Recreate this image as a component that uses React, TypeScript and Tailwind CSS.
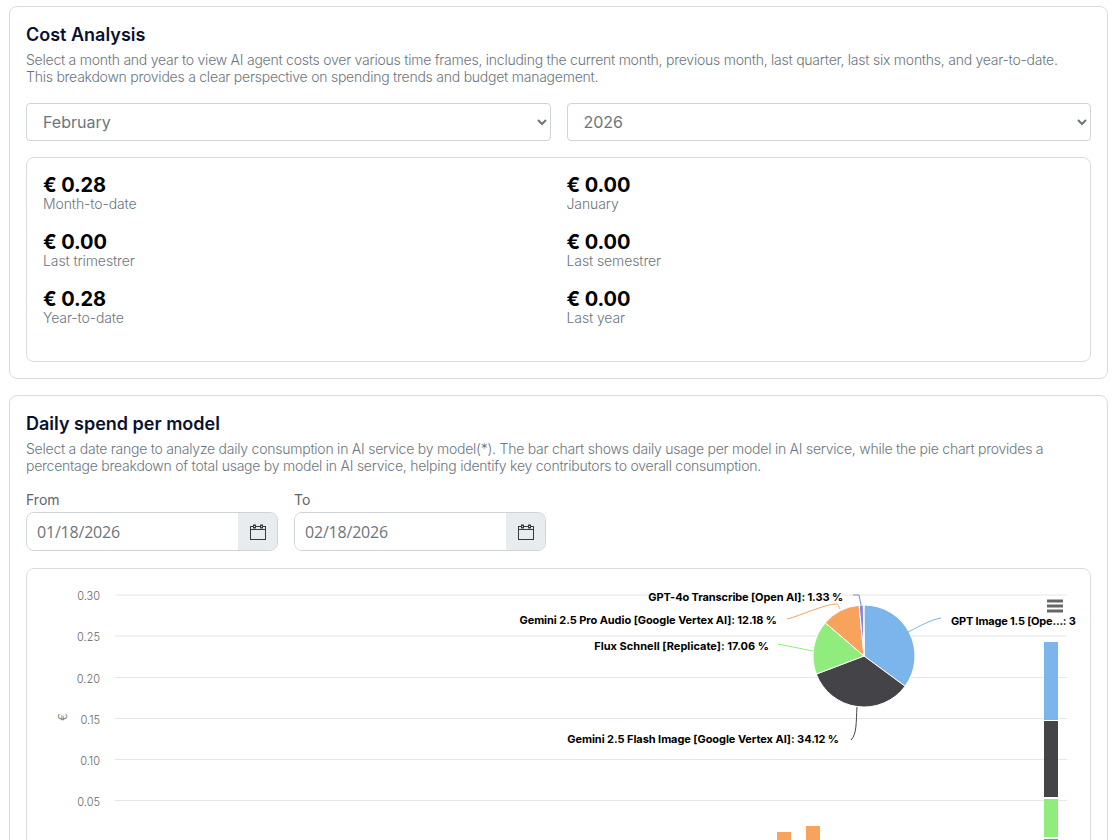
const FONT = "font-['Inter','Liberation_Sans',sans-serif]";

const cx = 864;
const cy = 656;
const r = 51;

const slices = [
  { pct: 35.11, color: "#7cb5ec" },
  { pct: 34.12, color: "#434348" },
  { pct: 17.06, color: "#90ed7d" },
  { pct: 12.18, color: "#f7a35c" },
  { pct: 1.33, color: "#8085e9" },
  { pct: 0.2, color: "#f15c80" },
];

function slicePaths() {
  let start = 0;
  return slices.map((s) => {
    const end = start + (s.pct / 100) * Math.PI * 2;
    const x1 = cx + r * Math.sin(start);
    const y1 = cy - r * Math.cos(start);
    const x2 = cx + r * Math.sin(end);
    const y2 = cy - r * Math.cos(end);
    const large = end - start > Math.PI ? 1 : 0;
    start = end;
    return { d: `M${cx} ${cy}L${x1} ${y1}A${r} ${r} 0 ${large} 1 ${x2} ${y2}Z`, color: s.color };
  });
}

const stats = [
  ["€ 0.28", "Month-to-date", "€ 0.00", "January"],
  ["€ 0.00", "Last trimestrer", "€ 0.00", "Last semestrer"],
  ["€ 0.28", "Year-to-date", "€ 0.00", "Last year"],
];

function Stat({ value, label }: { value: string; label: string }) {
  return (
    <div className="h-[57px]">
      <div className="text-[20px] leading-[23px] font-bold text-black tracking-[-0.1px]">{value}</div>
      <div className="-mt-[2px] text-[14px] leading-[17px] font-light text-[#6c757d] tracking-[-0.1px]">{label}</div>
    </div>
  );
}

function Select({ value }: { value: string }) {
  return (
    <select
      defaultValue={value}
      className="h-[38px] w-full rounded-[4px] border border-[#ced4da] bg-white pl-[12px] pr-[4px] text-[16px] text-[#6c757d]"
    >
      <option>{value}</option>
    </select>
  );
}

function DateField({ label, value }: { label: string; value: string }) {
  return (
    <div className="w-[252px]">
      <div className="mb-[4px] text-[14px] leading-[17px] text-[#5f666c]">{label}</div>
      <div className="flex h-[39px] overflow-hidden rounded-[8px] border border-[#ced4da]">
        <div className="flex flex-1 items-center bg-white pl-[10px] font-['Open_Sans',sans-serif] text-[16px] tracking-[-0.2px] text-[#6c757d]">
          {value}
        </div>
        <div className="flex w-[39px] items-center justify-center bg-[#e9ecef]">
          <svg width="16" height="16" viewBox="0 0 16 16" fill="none" stroke="#343a40" strokeWidth="1">
            <rect x="0.5" y="2.5" width="15" height="13" />
            <path d="M0.5 5.5h15" />
            <rect x="3.5" y="1" width="2" height="3" fill="#e9ecef" />
            <rect x="10.5" y="1" width="2" height="3" fill="#e9ecef" />
          </svg>
        </div>
      </div>
    </div>
  );
}

function Chart() {
  const grid = [595, 636, 677.5, 718.5, 759.5, 800.5];
  const ticks = ["0.30", "0.25", "0.20", "0.15", "0.10", "0.05"];
  const labelCls = "fill-black text-[11px] font-bold tracking-[-0.06px]";
  return (
    <svg className="block" width="1063" height="290" viewBox="27 569 1063 290">
      {grid.map((y) => (
        <path key={y} d={`M115 ${y}H1067`} stroke="#e6e6e6" strokeWidth="1" />
      ))}
      {ticks.map((t, i) => (
        <text key={t} x="100" y={grid[i] + 5} textAnchor="end" className="text-[11px] font-light" fill="#666666">
          {t}
        </text>
      ))}
      <text transform="translate(67 717) rotate(-90)" textAnchor="middle" className="text-[11px] font-light" fill="#666666">
        €
      </text>

      <rect x="777" y="832" width="14" height="12" fill="#f7a35c" />
      <rect x="806" y="826" width="14" height="18" fill="#f7a35c" />
      <rect x="1044" y="642" width="14" height="78" fill="#7cb5ec" />
      <rect x="1044" y="721" width="14" height="76" fill="#434348" />
      <rect x="1044" y="799" width="14" height="38" fill="#90ed7d" />
      <rect x="1044" y="839" width="14" height="12" fill="#8085e9" />

      <path d="M1047 601h16M1047 606h16M1047 611h16" stroke="#666666" strokeWidth="3" />

      {slicePaths().map((p) => (
        <path key={p.color} d={p.d} fill={p.color} stroke="#ffffff" strokeWidth="1" />
      ))}

      <path d="M908 632C920 626 930 620 941 618" fill="none" stroke="#7cb5ec" />
      <path d="M857 707C856 722 857 734 851 740" fill="none" stroke="#434348" />
      <path d="M813 651L778 644" fill="none" stroke="#90ed7d" />
      <path d="M840 609C838 605 838 604 836 604C825 604 800 616 787 619" fill="none" stroke="#f7a35c" />
      <path d="M861 605L859 595L853 595" fill="none" stroke="#8085e9" />

      <text x="951" y="625" className="fill-black text-[11px] font-bold tracking-[-0.2px]">GPT Image 1.5 [Ope...: 3</text>
      <text x="839" y="743" textAnchor="end" className={labelCls}>Gemini 2.5 Flash Image [Google Vertex AI]: 34.12 %</text>
      <text x="769" y="650" textAnchor="end" className="fill-black text-[11px] font-bold tracking-[0.03px]">Flux Schnell [Replicate]: 17.06 %</text>
      <text x="777" y="624" textAnchor="end" className={labelCls}>Gemini 2.5 Pro Audio [Google Vertex AI]: 12.18 %</text>
      <text x="843" y="601" textAnchor="end" className="fill-black text-[11px] font-bold tracking-[-0.1px]">GPT-4o Transcribe [Open AI]: 1.33 %</text>
    </svg>
  );
}

export default function App() {
  return (
    <div className={`h-[840px] overflow-hidden bg-white px-[9px] pt-[6px] ${FONT}`}>
      <section className="h-[373px] w-[1099px] rounded-[8px] border border-[#dcdcdc] px-[16px] pt-[16px]">
        <h2 className="text-[18px] leading-[24px] font-semibold text-[#0b1030]">Cost Analysis</h2>
        <p className="mt-[4px] whitespace-nowrap text-[14px] leading-[17px] font-light text-[#6c757d] tracking-[-0.24px]">
          Select a month and year to view AI agent costs over various time frames, including the current month, previous month, last quarter, last six months, and year-to-date.
          <br />
          This breakdown provides a clear perspective on spending trends and budget management.
        </p>
        <div className="mt-[18px] grid grid-cols-2 gap-[16px]">
          <Select value="February" />
          <Select value="2026" />
        </div>
        <div className="mt-[16px] h-[205px] rounded-[8px] border border-[#dcdcdc] px-[16px] pt-[16px]">
          {stats.map((row) => (
            <div key={row[1]} className="grid grid-cols-2 gap-[16px]">
              <Stat value={row[0]} label={row[1]} />
              <Stat value={row[2]} label={row[3]} />
            </div>
          ))}
        </div>
      </section>

      <section className="mt-[16px] w-[1099px] rounded-[8px] border border-[#dcdcdc] px-[16px] pt-[16px]">
        <h2 className="text-[18px] leading-[24px] font-semibold text-[#0b1030]">Daily spend per model</h2>
        <p className="mt-[4px] whitespace-nowrap text-[14px] leading-[17px] font-light text-[#6c757d] tracking-[-0.24px]">
          Select a date range to analyze daily consumption in AI service by model(*). The bar chart shows daily usage per model in AI service, while the pie chart provides a
          <br />
          percentage breakdown of total usage by model in AI service, helping identify key contributors to overall consumption.
        </p>
        <div className="mt-[17px] flex gap-[16px]">
          <DateField label="From" value="01/18/2026" />
          <DateField label="To" value="02/18/2026" />
        </div>
        <div className="mt-[17px] h-[300px] rounded-[8px] border border-[#dcdcdc]">
          <Chart />
        </div>
      </section>
    </div>
  );
}
